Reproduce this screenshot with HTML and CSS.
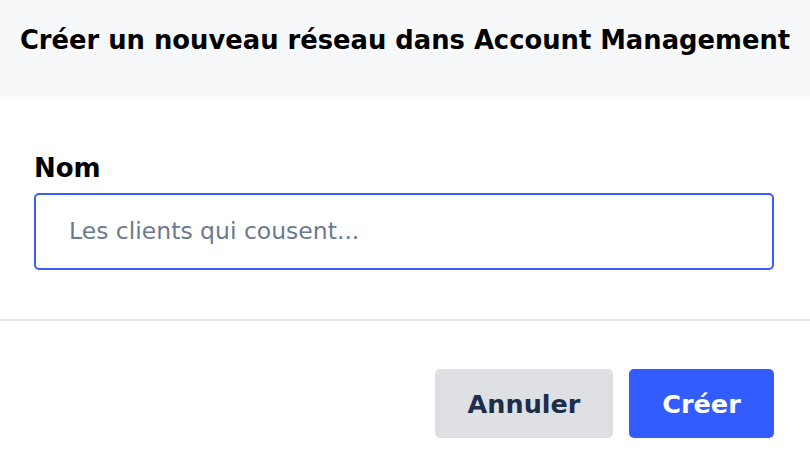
FILE: index.html
```html
<!DOCTYPE html>
<html lang="fr">
<head>
<meta charset="utf-8">
<title>Créer un nouveau réseau</title>
<link rel="stylesheet" href="styles.css">
</head>
<body>
<div class="modal">
  <header class="modal-header">
    <h1 class="modal-title">Créer un nouveau réseau dans Account Management</h1>
  </header>
  <section class="modal-body">
    <label class="field-label" for="name">Nom</label>
    <input class="field-input" id="name" type="text" placeholder="Les clients qui cousent...">
  </section>
  <footer class="modal-footer">
    <button class="btn btn-secondary" type="button">Annuler</button>
    <button class="btn btn-primary" type="button">Créer</button>
  </footer>
</div>
</body>
</html>
```
FILE: styles.css
```css
* { box-sizing: border-box; }
html, body { margin: 0; padding: 0; background: #ffffff; }
body { font-family: "DejaVu Sans", Inter, sans-serif; color: #000; }
.modal { width: 810px; height: 468px; display: flex; flex-direction: column; }
.modal-header {
  height: 97px;
  background: #f7f8fa;
  display: flex;
  align-items: flex-start;
  justify-content: center;
  padding-top: 23px;
}
.modal-title {
  margin: 0;
  font-size: 25.8px;
  font-weight: 700;
  line-height: 34px;
  white-space: nowrap;
}
.modal-body {
  padding: 54px 36px 49px 34px;
  display: flex;
  flex-direction: column;
  border-bottom: 2px solid #e1e1e6;
}
.field-label {
  font-size: 26px;
  font-weight: 700;
  line-height: 34px;
  margin-bottom: 8px;
}
.field-input {
  height: 77px;
  border: 2px solid #3a5ef5;
  border-radius: 5px;
  padding: 0 33px 2px;
  font-family: inherit;
  font-size: 23.5px;
  color: #1c2e4a;
  outline: none;
}
.field-input::placeholder { color: #6b7a90; }
.modal-footer {
  display: flex;
  justify-content: flex-end;
  gap: 16px;
  padding: 48px 36px 0 0;
}
.btn {
  height: 69px;
  border: none;
  border-radius: 5px;
  font-family: inherit;
  font-size: 25.5px;
  font-weight: 700;
  padding: 0;
}
.btn-secondary { background: #dfe0e4; color: #1c2e4a; width: 178px; }
.btn-primary { background: #335cff; color: #ffffff; width: 145px; }
```
